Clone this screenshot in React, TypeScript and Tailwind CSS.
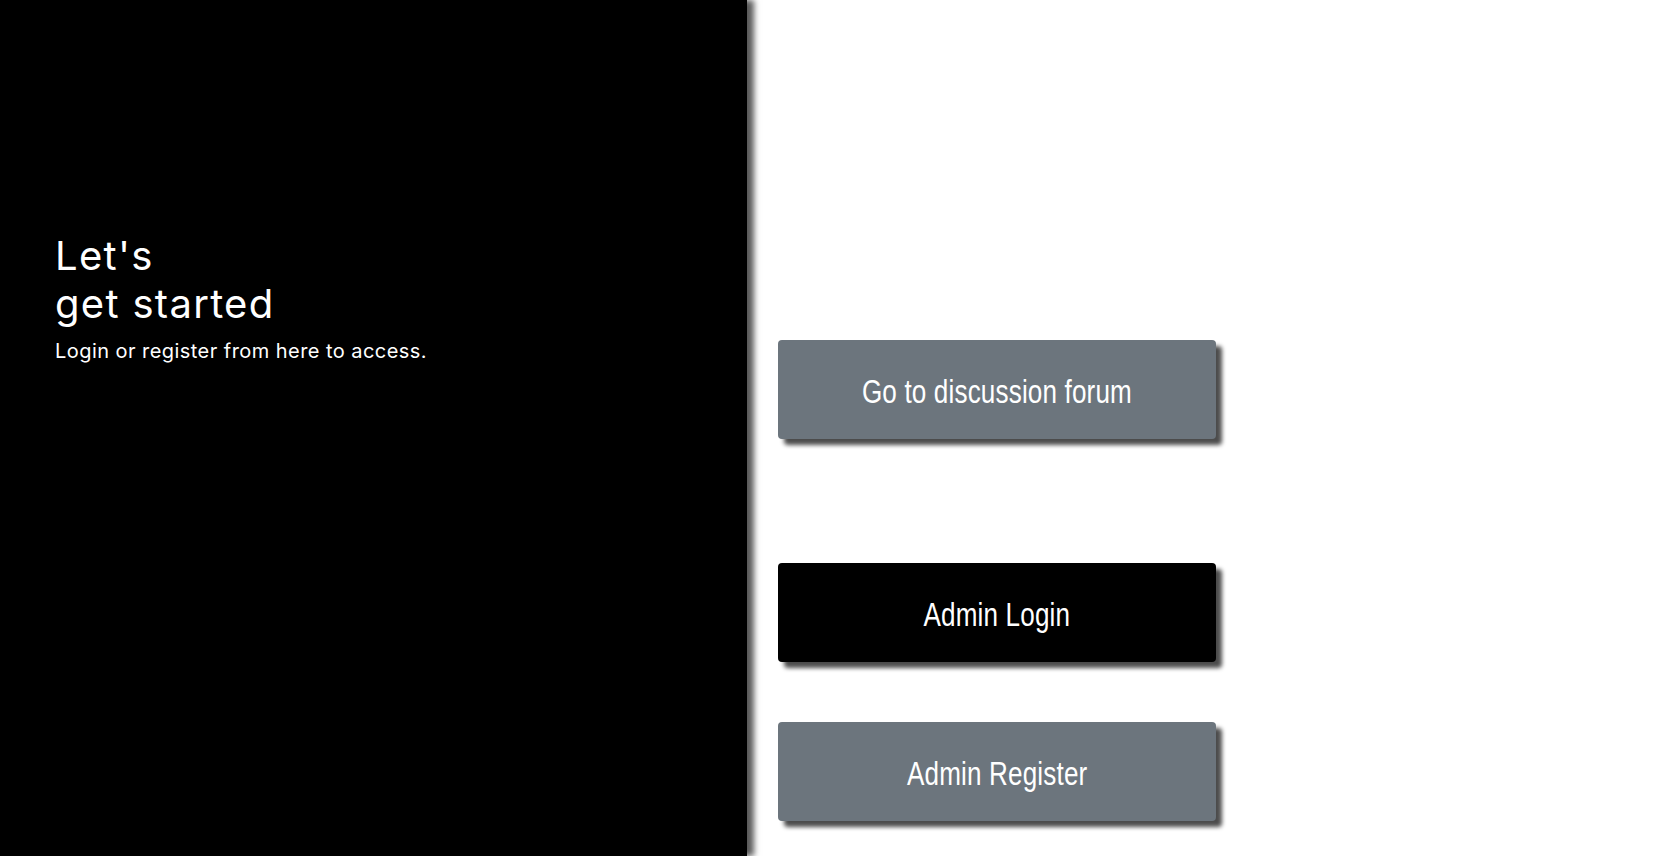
import React from "react";

export default function App() {
  const btn =
    "flex items-center justify-center w-[438px] h-[99px] pt-[4px] rounded-[4px] text-white shadow-[6px_6px_4px_rgba(0,0,0,0.7)]";
  const label =
    "inline-block whitespace-nowrap text-[33px] leading-none scale-x-[0.79] tracking-[0.2px]";
  const btnFont = { fontFamily: '"Liberation Sans", Arial, sans-serif' };
  return (
    <div className="flex h-[856px] w-full bg-white overflow-hidden">
      <div
        className="relative z-10 w-[747px] shrink-0 bg-black text-white pl-[55px] pt-[232px] shadow-[7px_0_6px_rgba(0,0,0,0.65)]"
        style={{ fontFamily: 'Inter, "Noto Sans", sans-serif' }}
      >
        <h1 className="text-[40px] leading-[48px] font-normal tracking-[1.3px]">
          Let's
          <br />
          get started
        </h1>
        <p className="mt-[9px] text-[20px] leading-[28px] tracking-[0.45px]">
          Login or register from here to access.
        </p>
      </div>
      <div className="flex flex-col pl-[31px] pt-[340px]" style={btnFont}>
        <button className={`${btn} bg-[#6c757d]`}>
          <span className={label}>Go to discussion forum</span>
        </button>
        <button className={`${btn} bg-black mt-[124px]`}>
          <span className={label}>Admin Login</span>
        </button>
        <button className={`${btn} bg-[#6c757d] mt-[60px]`}>
          <span className={label}>Admin Register</span>
        </button>
      </div>
    </div>
  );
}
